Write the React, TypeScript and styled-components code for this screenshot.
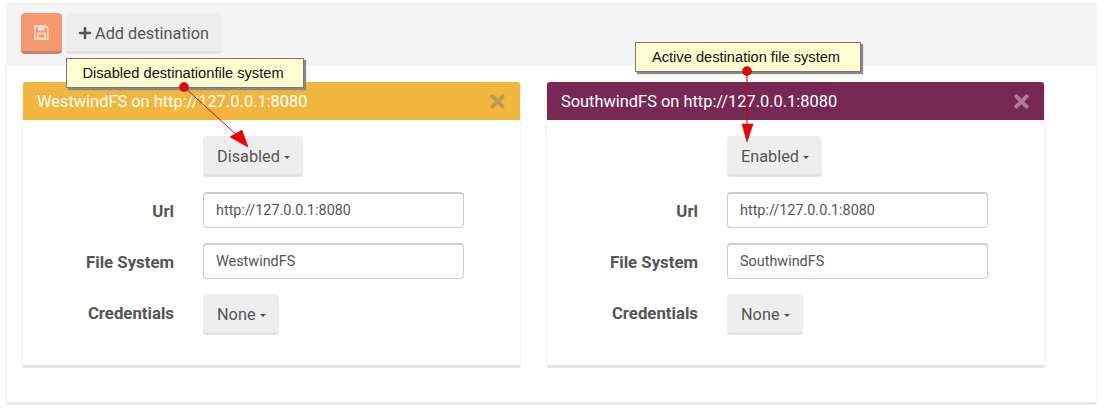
import styled, { createGlobalStyle } from 'styled-components'
import { FaPlus, FaTimes } from 'react-icons/fa'

const Global = createGlobalStyle`
  html, body {
    margin: 0;
    padding: 0;
    background: #fff;
  }
  body {
    font-family: Roboto, "Liberation Sans", sans-serif;
    color: #555;
  }
`

const Page = styled.div`
  position: relative;
  width: 1102px;
  height: 412px;
  padding: 3px 0 0 6px;
  box-sizing: border-box;
  overflow: hidden;
`

const Panel = styled.div`
  width: 1091px;
  height: 402px;
  box-sizing: border-box;
  border: 1px solid #efefef;
  border-bottom: 3px solid #e8e8e8;
  border-radius: 3px;
`

const Toolbar = styled.div`
  display: flex;
  gap: 4px;
  height: 62px;
  box-sizing: border-box;
  padding: 9px 14px;
  background: #f4f4f4;
`

const Button = styled.button`
  display: inline-flex;
  align-items: center;
  justify-content: center;
  height: 41px;
  padding: 2px 13px 0 14px;
  box-sizing: border-box;
  border: 0;
  border-bottom: 3px solid #e2e2e2;
  border-radius: 4px;
  background: #eeeeee;
  color: #555;
  font-family: inherit;
  font-size: 16.3px;
`

const SaveButton = styled(Button)`
  width: 41px;
  padding: 0;
  background: #f6986f;
  border-bottom-color: #c98163;
`

const AddButton = styled(Button)`
  width: 155px;
  padding: 2px 0 0;
  gap: 3px;
  svg {
    font-size: 14px;
  }
`

const Cards = styled.div`
  display: flex;
  gap: 25px;
  padding: 16px 0 0 15px;
`

const Card = styled.section`
  width: 499px;
  height: 286px;
  box-sizing: border-box;
  border: 1px solid #efefef;
  border-top: 0;
  border-bottom: 3px solid #e4e4e4;
  border-radius: 3px;
  background: #fff;
`

const CardHeader = styled.header<{ $color: string }>`
  display: flex;
  align-items: center;
  justify-content: space-between;
  height: 38px;
  padding: 0 12px 0 14px;
  background: ${(p) => p.$color};
  border-radius: 3px 3px 0 0;
  color: #fff;
  font-size: 16.4px;
`

const Close = styled.span<{ $color: string }>`
  display: flex;
  color: ${(p) => p.$color};
  font-size: 21px;
`

const Form = styled.div`
  display: grid;
  grid-template-columns: 151px 261px;
  column-gap: 29px;
  row-gap: 15px;
  padding-top: 16px;
  align-items: center;
`

const Label = styled.label`
  text-align: right;
  padding-top: 1px;
  font-size: 16.8px;
  font-weight: 700;
  color: #555;
`

const CredentialsLabel = styled(Label)`
  padding: 0 0 3px;
`

const Dropdown = styled(Button)`
  justify-self: start;
  gap: 4px;
`

const Caret = styled.i`
  width: 0;
  height: 0;
  margin-top: 2px;
  border-top: 3px solid #555;
  border-left: 3px solid transparent;
  border-right: 3px solid transparent;
`

const Input = styled.input`
  width: 261px;
  height: 36px;
  box-sizing: border-box;
  padding: 0 12px;
  border: 1px solid #ccc;
  border-top-width: 2px;
  border-radius: 4px;
  background: #fff;
  color: #555;
  font-family: inherit;
  font-size: 14.4px;
  outline: none;
`

const Callout = styled.div<{ $left: number; $top: number; $width: number }>`
  position: absolute;
  left: ${(p) => p.$left}px;
  top: ${(p) => p.$top}px;
  width: ${(p) => p.$width}px;
  height: 30px;
  box-sizing: border-box;
  display: flex;
  align-items: center;
  justify-content: center;
  padding-right: 4px;
  border: 1px solid #777;
  background: #ffffd2;
  box-shadow: 2px 2px 1px #888;
  color: #111;
  font-family: "Liberation Sans", Arial, sans-serif;
  font-size: 14.67px;
`

const Arrows = styled.svg`
  position: absolute;
  left: 0;
  top: 0;
  pointer-events: none;
`

function SaveIcon() {
  return (
    <svg width="15" height="15" viewBox="0 0 15 15" fill="none">
      <path d="M1.5 1H11.5L14 3.5V14H1V1.5Z" stroke="#fde3d8" strokeWidth="1.5" />
      <path d="M4 1.5H10.5V5.5H4Z" fill="#fde3d8" />
      <path d="M3.8 8.5H11.2V13.5H3.8Z" stroke="#fde3d8" strokeWidth="1.4" />
    </svg>
  )
}

function Destination({ name, color, closeColor, status }: { name: string; color: string; closeColor: string; status: string }) {
  return (
    <Card>
      <CardHeader $color={color}>
        <span>{name} on http://127.0.0.1:8080</span>
        <Close $color={closeColor}><FaTimes /></Close>
      </CardHeader>
      <Form>
        <span />
        <Dropdown>{status} <Caret /></Dropdown>
        <Label>Url</Label>
        <Input readOnly value="http://127.0.0.1:8080" />
        <Label>File System</Label>
        <Input readOnly value={name} />
        <CredentialsLabel>Credentials</CredentialsLabel>
        <Dropdown>None <Caret /></Dropdown>
      </Form>
    </Card>
  )
}

export default function App() {
  return (
    <Page>
      <Global />
      <Panel>
        <Toolbar>
          <SaveButton><SaveIcon /></SaveButton>
          <AddButton><FaPlus /> Add destination</AddButton>
        </Toolbar>
        <Cards>
          <Destination name="WestwindFS" color="#f0b63d" closeColor="#bb9a58" status="Disabled" />
          <Destination name="SouthwindFS" color="#772953" closeColor="#b07b9c" status="Enabled" />
        </Cards>
      </Panel>
      <Callout $left={66} $top={58} $width={238}>Disabled destinationfile system</Callout>
      <Callout $left={635} $top={42} $width={226}>Active destination file system</Callout>
      <Arrows width="1102" height="412" viewBox="0 0 1102 412">
        <line x1="184" y1="87" x2="240" y2="138" stroke="#e00000" strokeWidth="1" />
        <polygon points="230,137 242,130 248,147" fill="#f00000" stroke="#900" strokeWidth="0.5" />
        <circle cx="184" cy="87" r="4.5" fill="#f00000" stroke="#a00000" strokeWidth="0.5" />
        <line x1="747" y1="71" x2="747" y2="126" stroke="#d00000" strokeWidth="1" />
        <polygon points="742,124 753,124 747,142" fill="#f00000" stroke="#900" strokeWidth="0.5" />
        <circle cx="747" cy="71" r="4.5" fill="#f00000" stroke="#a00000" strokeWidth="0.5" />
      </Arrows>
    </Page>
  )
}
